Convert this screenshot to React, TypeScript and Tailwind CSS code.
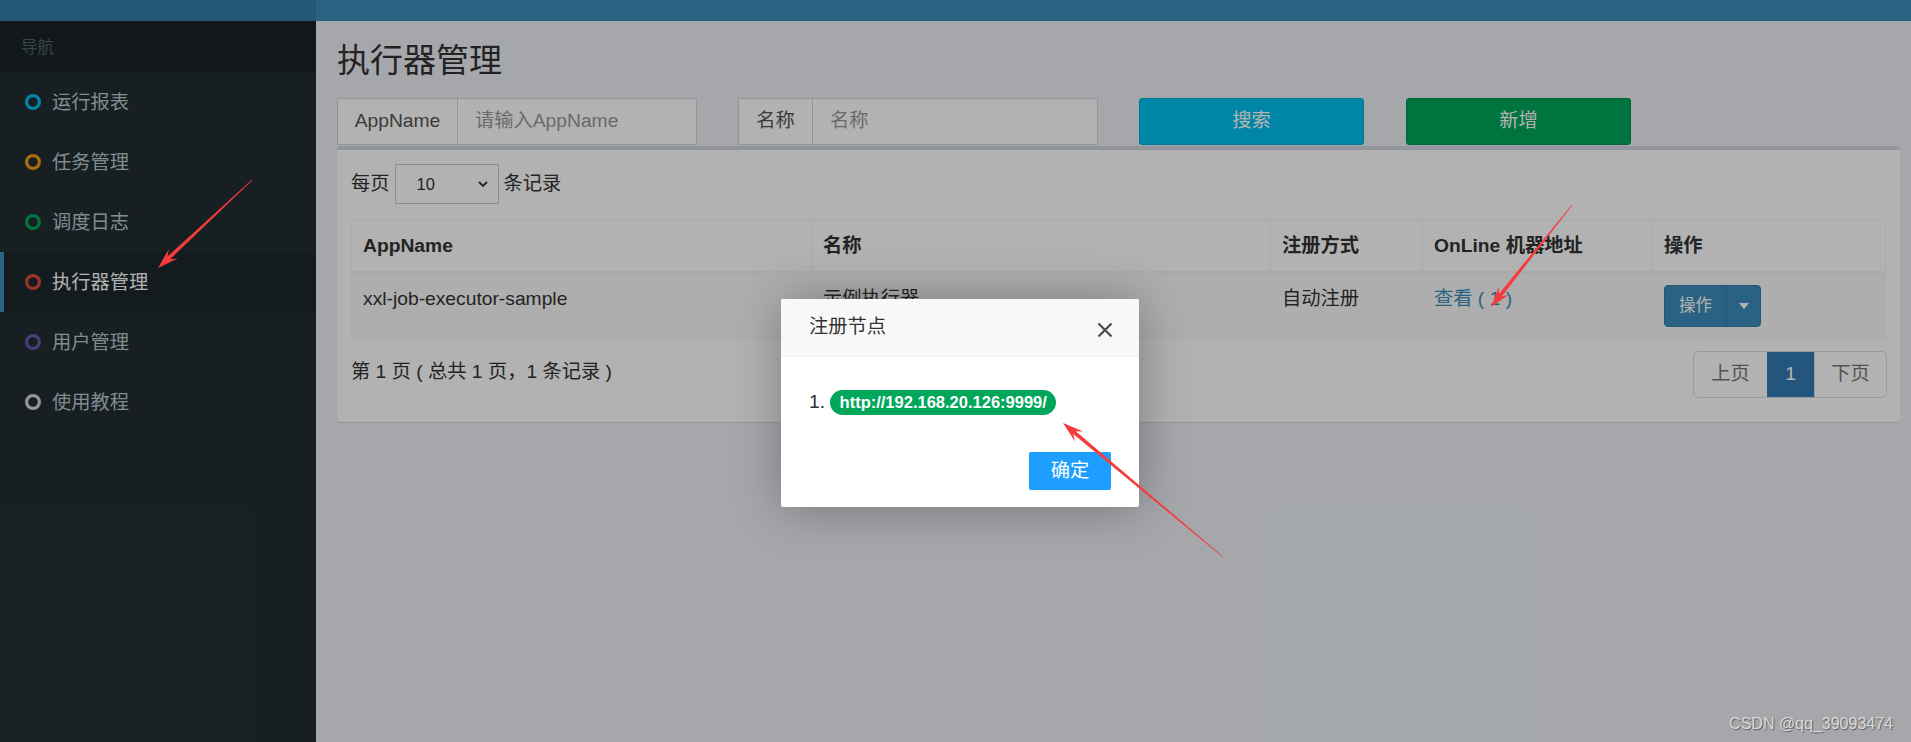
const menu = [
  { label: "运行报表", color: "#00c0ef" },
  { label: "任务管理", color: "#f39c12" },
  { label: "调度日志", color: "#00a65a" },
  { label: "执行器管理", color: "#dd4b39", active: true },
  { label: "用户管理", color: "#605ca8" },
  { label: "使用教程", color: "#d2d6de" },
]

const arrows = [
  { x1: 252, y1: 180, x2: 158, y2: 268 },
  { x1: 1572, y1: 205, x2: 1491, y2: 307 },
  { x1: 1223, y1: 557, x2: 1063, y2: 423 },
]

// tapered annotation arrow, thin at the tail and notched at the head
function arrowPoints(x1: number, y1: number, x2: number, y2: number) {
  const dx = x2 - x1
  const dy = y2 - y1
  const len = Math.hypot(dx, dy)
  const ux = dx / len
  const uy = dy / len
  const nx = -uy
  const ny = ux
  const L = 21, H = 6.5, w0 = 0.35, w1 = 1.9, notch = 15
  const bx = x2 - ux * notch, by = y2 - uy * notch
  const hx = x2 - ux * L, hy = y2 - uy * L
  const pts = [
    [x1 + nx * w0, y1 + ny * w0],
    [bx + nx * w1, by + ny * w1],
    [hx + nx * H, hy + ny * H],
    [x2, y2],
    [hx - nx * H, hy - ny * H],
    [bx - nx * w1, by - ny * w1],
    [x1 - nx * w0, y1 - ny * w0],
  ]
  return pts.map((p) => p.map((v) => v.toFixed(2)).join(",")).join(" ")
}

function Ring({ color }: { color: string }) {
  return (
    <svg width="16" height="16" viewBox="0 0 16 16" className="shrink-0">
      <circle cx="8" cy="8" r="6.4" fill="none" stroke={color} strokeWidth="3.2" />
    </svg>
  )
}

function Sidebar() {
  return (
    <aside className="flex w-[316px] shrink-0 flex-col bg-[#222d32]">
      <div className="h-[21px] bg-[#367fa9]" />
      <div className="flex h-[51px] items-center bg-[#1a2226] pl-[21px] text-[16.5px] leading-[20px] text-[#4b646f]">导航</div>
      {menu.map((m) => (
        <div
          key={m.label}
          className={
            m.active
              ? "flex h-[60px] items-center gap-[11px] border-l-4 border-[#3c8dbc] bg-[#1e282c] pl-[21px] text-white"
              : "flex h-[60px] items-center gap-[11px] pl-[25px] text-[#b8c7ce]"
          }
        >
          <Ring color={m.color} />
          <span className="text-[19.25px] leading-[27px]">{m.label}</span>
        </div>
      ))}
    </aside>
  )
}

function InputGroup({ addon, placeholder, addonWidth }: { addon: string; placeholder: string; addonWidth: string }) {
  return (
    <div className="flex h-[47px] w-[360px] border border-[#d2d6de] bg-white">
      <div className={`flex items-center justify-center border-r border-[#d2d6de] text-[#555] ${addonWidth}`}>{addon}</div>
      <div className="flex flex-1 items-center pl-[17px] text-[#999]">{placeholder}</div>
    </div>
  )
}

function Main() {
  return (
    <main className="flex flex-1 flex-col bg-[#ecf0f5]">
      <div className="h-[21px] bg-[#3c8dbc]" />
      <div className="pl-[21px] pr-[13px]">
        <h1 className="mt-[22px] text-[33px] font-normal leading-[36px] text-[#333]">执行器管理</h1>

        <div className="mt-[19px] flex h-[47px] items-stretch">
          <InputGroup addon="AppName" placeholder="请输入AppName" addonWidth="w-[120px]" />
          <div className="ml-[41px]">
            <InputGroup addon="名称" placeholder="名称" addonWidth="w-[74px]" />
          </div>
          <button className="ml-[41px] w-[225px] rounded-[3px] border border-[#00acd6] bg-[#00c0ef] text-white">搜索</button>
          <button className="ml-[42px] w-[225px] rounded-[3px] border border-[#008d4c] bg-[#00a65a] text-white">新增</button>
        </div>

        <div className="mt-[1px] rounded-[4px] border-t-4 border-[#d2d6de] bg-white px-[14px] pb-[24px] pt-[14px] shadow-[0_1px_1px_rgba(0,0,0,0.1)]">
          <div className="flex h-[40px] items-center text-[#333]">
            <span>每页</span>
            <div className="mx-[5px] flex h-[40px] w-[104px] items-center justify-between border border-[#ccc] pl-[21px] pr-[9px] text-[16.5px]">
              <span>10</span>
              <svg width="12" height="12" viewBox="0 0 12 12">
                <polyline points="2,4 6,8 10,4" fill="none" stroke="#333" strokeWidth="1.8" />
              </svg>
            </div>
            <span>条记录</span>
          </div>

          <table className="mt-[16px] w-[1534px] table-fixed border-collapse text-[#333]">
            <colgroup>
              <col className="w-[460px]" />
              <col className="w-[459px]" />
              <col className="w-[152px]" />
              <col className="w-[230px]" />
              <col className="w-[233px]" />
            </colgroup>
            <thead>
              <tr>
                {["AppName", "名称", "注册方式", "OnLine 机器地址", "操作"].map((h) => (
                  <th key={h} className="border border-b-[3px] border-[#f4f4f4] px-[11px] py-[11px] text-left font-bold leading-[27.5px]">
                    {h}
                  </th>
                ))}
              </tr>
            </thead>
            <tbody>
              <tr className="bg-[#f9f9f9] align-top">
                <td className="border border-[#f4f4f4] px-[11px] py-[11px] leading-[27.5px]">xxl-job-executor-sample</td>
                <td className="border border-[#f4f4f4] px-[11px] py-[11px] leading-[27.5px]">示例执行器</td>
                <td className="border border-[#f4f4f4] px-[11px] py-[11px] leading-[27.5px]">自动注册</td>
                <td className="border border-[#f4f4f4] px-[11px] py-[11px] leading-[27.5px] text-[#3c8dbc]">查看 ( 1 )</td>
                <td className="border border-[#f4f4f4] px-[11px] py-[11px]">
                  <div className="flex h-[42px] w-[97px] overflow-hidden rounded-[4px] border border-[#367fa9] bg-[#3c8dbc] text-[16.5px] text-white">
                    <span className="flex w-[62px] items-center justify-center border-r border-[#367fa9]">操作</span>
                    <span className="flex flex-1 items-center justify-center">
                      <svg width="10" height="6" viewBox="0 0 10 6">
                        <polygon points="0,0 10,0 5,6" fill="#fff" />
                      </svg>
                    </span>
                  </div>
                </td>
              </tr>
            </tbody>
          </table>

          <div className="mt-[12px] flex items-start justify-between">
            <div className="pt-[7px] leading-[27.5px] text-[#333]">第 1 页 ( 总共 1 页，1 条记录 )</div>
            <div className="mr-[-1px] flex h-[47px] overflow-hidden rounded-[5px] border border-[#ddd]">
              <span className="flex w-[73px] items-center justify-center text-[#777]">上页</span>
              <span className="flex w-[47px] items-center justify-center bg-[#337ab7] text-white">1</span>
              <span className="flex w-[72px] items-center justify-center border-l border-[#ddd] text-[#777]">下页</span>
            </div>
          </div>
        </div>
      </div>
    </main>
  )
}

function Dialog() {
  return (
    <div className="absolute left-[781px] top-[299px] flex h-[208px] w-[358px] flex-col rounded-[2px] bg-white shadow-[1px_1px_50px_rgba(0,0,0,0.3)]">
      <div className="relative flex h-[58px] items-center border-b border-[#eee] bg-[#f8f8f8] pl-[28px] text-[#333]">
        注册节点
        <svg className="absolute left-[316px] top-[23px]" width="16" height="16" viewBox="0 0 16 16">
          <path d="M1.5 1.5 L14.5 14.5 M14.5 1.5 L1.5 14.5" stroke="#4a4a4a" strokeWidth="2.2" />
        </svg>
      </div>
      <div className="mt-[33px] flex h-[25px] items-center pl-[28px] text-[#333]">
        <span className="mr-[5px]">1.</span>
        <span className="h-[25px] rounded-full bg-[#00a65a] px-[9.5px] text-[16.5px] font-bold leading-[25px] text-white">http://192.168.20.126:9999/</span>
      </div>
      <div className="mt-[37px] flex justify-end pr-[28px]">
        <button className="h-[38px] w-[82px] rounded-[2px] bg-[#1e9fff] text-white">确定</button>
      </div>
    </div>
  )
}

export default function App() {
  return (
    <div className="relative flex h-[742px] w-[1911px] overflow-hidden font-['Liberation_Sans','Noto_Sans_CJK_SC',sans-serif] text-[19.25px]">
      <Sidebar />
      <Main />
      <div className="absolute inset-0 bg-black/30" />
      <Dialog />
      <svg className="pointer-events-none absolute inset-0" width="1911" height="742">
        {arrows.map((a, i) => (
          <polygon key={i} points={arrowPoints(a.x1, a.y1, a.x2, a.y2)} fill="#f53b3b" />
        ))}
      </svg>
      <div className="absolute bottom-[8px] right-[18px] text-[16px] leading-[20px] text-[#dadada] [text-shadow:1px_1px_1px_rgba(0,0,0,0.45)]">
        CSDN @qq_39093474
      </div>
    </div>
  )
}
